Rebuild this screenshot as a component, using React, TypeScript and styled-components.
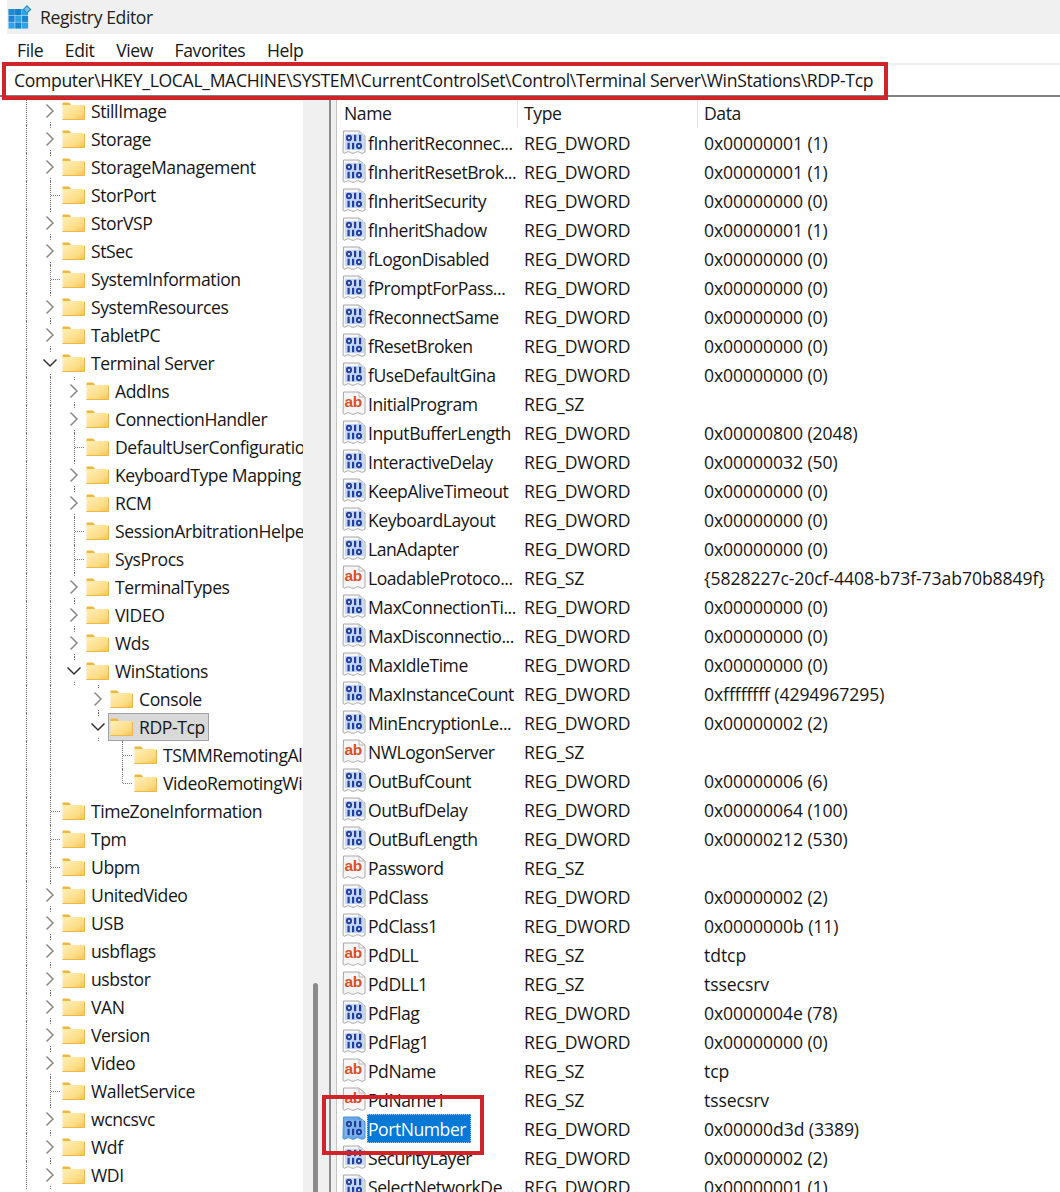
import React from "react";
import styled, { createGlobalStyle } from "styled-components";

const Global = createGlobalStyle`
  html, body { margin: 0; padding: 0; background: #fff; }
  #root { width: 1060px; height: 1192px; overflow: hidden; }
`;

const Window = styled.div`
  width: 1060px;
  height: 1192px;
  display: flex;
  flex-direction: column;
  overflow: hidden;
  background: #fff;
  color: #161616;
  font-family: "Open Sans", "Noto Sans", sans-serif;
  font-size: 17.6px;
  letter-spacing: -0.42px;
  white-space: nowrap;
`;

const TitleBar = styled.div`
  height: 34px;
  flex: none;
  margin-left: 7px;
  background: #f0f0f0;
  display: flex;
  align-items: center;
  gap: 8px;
  padding-left: 1px;
  color: #222;
`;

const MenuBar = styled.div`
  height: 29px;
  flex: none;
  display: flex;
  align-items: center;
  gap: 21.7px;
  padding: 3px 0 0 17px;
  box-sizing: border-box;
`;

const AddressBar = styled.div`
  position: relative;
  z-index: 3;
  height: 34px;
  flex: none;
  box-sizing: border-box;
  border-top: 2px solid #efefef;
  border-bottom: 2px solid #808080;
  padding-left: 14px;
  display: flex;
  align-items: center;
  letter-spacing: -0.335px;
`;

const Annotation = styled.div`
  position: absolute;
  z-index: 5;
  box-sizing: border-box;
  border: 4px solid #d1232a;
  pointer-events: none;
`;

const AddressMark = styled(Annotation)`
  left: 2px;
  top: -3px;
  width: 886px;
  height: 38px;
`;

const PortMark = styled(Annotation)`
  left: -15px;
  top: -19px;
  width: 162px;
  height: 60px;
`;

const Main = styled.div`
  flex: 1;
  min-height: 0;
  display: flex;
`;

const TreePane = styled.div`
  width: 303px;
  flex: none;
  overflow: hidden;
`;

const Row = styled.div`
  height: 28px;
  display: flex;
  align-items: stretch;
  padding-left: 14px;
`;

const Guide = styled.div<{ $line?: boolean }>`
  width: 24px;
  flex: none;
  position: relative;
  &::before {
    content: "";
    display: ${(p) => (p.$line ? "block" : "none")};
    position: absolute;
    left: 12px;
    top: 0;
    bottom: 0;
    border-left: 1px dotted #777;
  }
`;

const Toggle = styled.div`
  width: 24px;
  flex: none;
  position: relative;
  display: flex;
  align-items: center;
  justify-content: center;
  &::before,
  &::after {
    content: "";
    position: absolute;
    left: 12px;
    height: 3px;
    border-left: 1px dotted #777;
  }
  &::before { top: 0; }
  &::after { bottom: 0; }
`;

const Stub = styled.div<{ $last?: boolean }>`
  width: 24px;
  flex: none;
  position: relative;
  &::before {
    content: "";
    position: absolute;
    left: 12px;
    top: 0;
    bottom: ${(p) => (p.$last ? "50%" : "0")};
    border-left: 1px dotted #777;
  }
  &::after {
    content: "";
    position: absolute;
    left: 13px;
    right: 2px;
    top: 50%;
    border-top: 1px dotted #777;
  }
`;

const Label = styled.div<{ $selected?: boolean }>`
  display: flex;
  align-items: center;
  gap: 6px;
  box-sizing: border-box;
  height: 28px;
  margin-left: -2px;
  padding: 0 4px 0 2px;
  background: ${(p) => (p.$selected ? "#d9d9d9" : "transparent")};
  box-shadow: ${(p) => (p.$selected ? "inset 0 0 0 1px #a2a2a2" : "none")};
`;

const Track = styled.div`
  width: 26px;
  flex: none;
  background: #f0f0f0;
  display: flex;
  flex-direction: column;
  justify-content: flex-end;
`;

const Thumb = styled.div`
  width: 5px;
  height: 209px;
  margin-left: 10px;
  background: #8b8b8b;
  border-radius: 3px 3px 0 0;
`;

const Splitter = styled.div`
  width: 7px;
  flex: none;
  box-sizing: border-box;
  background: #f0f0f0;
  border-left: 2px solid #8c8c8c;
`;

const ListPane = styled.div`
  flex: 1;
  min-width: 0;
  position: relative;
  z-index: 2;
  border-left: 1px solid #c4c4c4;
`;

const Header = styled.div`
  height: 31px;
  display: grid;
  grid-template-columns: 181px 180px 1fr;
`;

const HeadCell = styled.div<{ $pad?: number }>`
  display: flex;
  align-items: center;
  padding-left: ${(p) => p.$pad ?? 6}px;
  border-right: 1px solid #e5e5e5;
  &:last-child { border-right: 0; }
`;

const ListRow = styled.div`
  position: relative;
  height: 29px;
  display: grid;
  grid-template-columns: 187px 180px 1fr;
  align-items: center;
`;

const NameCell = styled.div`
  display: flex;
  align-items: center;
  padding-left: 5px;
`;

const Name = styled.span<{ $selected?: boolean }>`
  display: inline-flex;
  align-items: center;
  height: 29px;
  padding: 0 1px;
  box-sizing: border-box;
  letter-spacing: -0.48px;
  background: ${(p) => (p.$selected ? "#0078d7" : "transparent")};
  color: ${(p) => (p.$selected ? "#fff" : "inherit")};
  outline: ${(p) => (p.$selected ? "1px dotted #9cc7ec" : "none")};
  outline-offset: -1px;
`;

const SelectedName = styled(Name)`
  width: 104px;
`;

const ValueCell = styled.div`
  letter-spacing: -0.12px;
`;

const DataCell = styled.div`
  letter-spacing: -0.08px;
`;

const RegLogo = () => (
  <svg width="24" height="24" viewBox="0 0 24 24">
    {[0, 1, 2].flatMap((r) =>
      [0, 1, 2].map((c) => (
        <rect
          key={`${r}${c}`}
          x={c * 6.7 + 0.5}
          y={r * 6.7 + 4}
          width="6.2"
          height="6.2"
          fill={(r + c) % 2 ? "#1788d0" : "#2fa3e6"}
        />
      ))
    )}
    <rect x="0.5" y="4" width="13" height="6.2" fill="#0f76b8" opacity="0.5" />
    <path d="M19 0.8l3.6 3.6-3.6 3.6-3.6-3.6z" fill="#7cc0e8" stroke="#2b8dc8" strokeWidth="1.2" />
  </svg>
);

const Folder = () => (
  <svg width="23" height="18" viewBox="0 0 23 18" style={{ flex: "none" }}>
    <defs>
      <linearGradient id="fg" x1="0" y1="0" x2="1" y2="1">
        <stop offset="0" stopColor="#fff0b8" />
        <stop offset="0.65" stopColor="#fbdc85" />
        <stop offset="1" stopColor="#f3c04e" />
      </linearGradient>
    </defs>
    <path d="M0.5 1.5C0.5 0.8 1 0.5 1.5 0.5H7L9 2.5V5H0.5z" fill="#eeb83e" />
    <rect x="0.5" y="3" width="22" height="15" rx="0.6" fill="url(#fg)" />
    <path d="M0.5 17.5H22.5V4" fill="none" stroke="#edba4a" strokeWidth="1" />
  </svg>
);

const ChevronRight = () => (
  <svg width="10" height="16" viewBox="0 0 10 16">
    <path d="M1.5 1.5L8 8l-6.5 6.5" fill="none" stroke="#8a8a8a" strokeWidth="1.5" />
  </svg>
);

const ChevronDown = () => (
  <svg width="16" height="10" viewBox="0 0 16 10">
    <path d="M1.5 1.5L8 8l6.5-6.5" fill="none" stroke="#333" strokeWidth="1.5" />
  </svg>
);

const Page = ({ selected, children }: { selected?: boolean; children: React.ReactNode }) => (
  <svg width="25" height="25" viewBox="0 0 25 25" style={{ flex: "none" }}>
    <path
      d="M1.5 1H17l6 5v16c-2 1.5-3.5 1.5-5 .5s-3-1-4.5 0-3.5 1-5 0-3-1-4.5 0-2.5 1-3-.5z"
      fill={selected ? "#6aa9e6" : "#f6f6f6"}
      stroke={selected ? "#4f90d6" : "#a8a8a8"}
      strokeWidth="1"
    />
    <path d="M17 1v5h6" fill="none" stroke={selected ? "#4f90d6" : "#b8b8b8"} strokeWidth="1" />
    {children}
  </svg>
);

const Zero = ({ x, y }: { x: number; y: number }) => (
  <ellipse cx={x} cy={y} rx="2.1" ry="2.2" fill="none" stroke="#233f9c" strokeWidth="1.9" />
);
const One = ({ x, y }: { x: number; y: number }) => (
  <rect x={x - 1} y={y - 3.2} width="2.2" height="6.4" fill="#233f9c" />
);

const DwordIcon = ({ selected }: { selected?: boolean }) => (
  <Page selected={selected}>
    <rect x="3" y="4" width="19" height="16" fill={selected ? "#7fb6ea" : "#c6d7f7"} />
    <Zero x={7} y={8} />
    <One x={13} y={8} />
    <One x={18} y={8} />
    <One x={6.5} y={16} />
    <One x={11} y={16} />
    <Zero x={17} y={16} />
  </Page>
);

const AbText = styled.text`
  font-family: "Liberation Sans", sans-serif;
  font-weight: 700;
  font-size: 15.5px;
  letter-spacing: -0.3px;
  fill: #d9502a;
`;

const StringIcon = () => (
  <Page>
    <AbText x="2.5" y="16">ab</AbText>
  </Page>
);

type TreeItem = { t: string; k: "c" | "o" | "s" | "l"; d?: number; sel?: boolean };

const tree: TreeItem[] = [
  { t: "StillImage", k: "c" },
  { t: "Storage", k: "c" },
  { t: "StorageManagement", k: "c" },
  { t: "StorPort", k: "s" },
  { t: "StorVSP", k: "c" },
  { t: "StSec", k: "c" },
  { t: "SystemInformation", k: "s" },
  { t: "SystemResources", k: "c" },
  { t: "TabletPC", k: "c" },
  { t: "Terminal Server", k: "o" },
  { t: "AddIns", k: "c", d: 1 },
  { t: "ConnectionHandler", k: "c", d: 1 },
  { t: "DefaultUserConfiguration", k: "s", d: 1 },
  { t: "KeyboardType Mapping", k: "c", d: 1 },
  { t: "RCM", k: "c", d: 1 },
  { t: "SessionArbitrationHelper", k: "s", d: 1 },
  { t: "SysProcs", k: "s", d: 1 },
  { t: "TerminalTypes", k: "c", d: 1 },
  { t: "VIDEO", k: "c", d: 1 },
  { t: "Wds", k: "c", d: 1 },
  { t: "WinStations", k: "o", d: 1 },
  { t: "Console", k: "c", d: 2 },
  { t: "RDP-Tcp", k: "o", d: 2, sel: true },
  { t: "TSMMRemotingAllowList", k: "s", d: 3 },
  { t: "VideoRemotingWindowNames", k: "l", d: 3 },
  { t: "TimeZoneInformation", k: "s" },
  { t: "Tpm", k: "s" },
  { t: "Ubpm", k: "s" },
  { t: "UnitedVideo", k: "c" },
  { t: "USB", k: "c" },
  { t: "usbflags", k: "c" },
  { t: "usbstor", k: "c" },
  { t: "VAN", k: "c" },
  { t: "Version", k: "c" },
  { t: "Video", k: "c" },
  { t: "WalletService", k: "s" },
  { t: "wcncsvc", k: "c" },
  { t: "Wdf", k: "c" },
  { t: "WDI", k: "c" },
];

const D = "REG_DWORD";
const S = "REG_SZ";
const z = "0x00000000 (0)";
const one = "0x00000001 (1)";
const two = "0x00000002 (2)";

const values: [string, string, string][] = [
  ["fInheritReconnec...", D, one],
  ["fInheritResetBrok...", D, one],
  ["fInheritSecurity", D, z],
  ["fInheritShadow", D, one],
  ["fLogonDisabled", D, z],
  ["fPromptForPass...", D, z],
  ["fReconnectSame", D, z],
  ["fResetBroken", D, z],
  ["fUseDefaultGina", D, z],
  ["InitialProgram", S, ""],
  ["InputBufferLength", D, "0x00000800 (2048)"],
  ["InteractiveDelay", D, "0x00000032 (50)"],
  ["KeepAliveTimeout", D, z],
  ["KeyboardLayout", D, z],
  ["LanAdapter", D, z],
  ["LoadableProtoco...", S, "{5828227c-20cf-4408-b73f-73ab70b8849f}"],
  ["MaxConnectionTi...", D, z],
  ["MaxDisconnectio...", D, z],
  ["MaxIdleTime", D, z],
  ["MaxInstanceCount", D, "0xffffffff (4294967295)"],
  ["MinEncryptionLe...", D, two],
  ["NWLogonServer", S, ""],
  ["OutBufCount", D, "0x00000006 (6)"],
  ["OutBufDelay", D, "0x00000064 (100)"],
  ["OutBufLength", D, "0x00000212 (530)"],
  ["Password", S, ""],
  ["PdClass", D, two],
  ["PdClass1", D, "0x0000000b (11)"],
  ["PdDLL", S, "tdtcp"],
  ["PdDLL1", S, "tssecsrv"],
  ["PdFlag", D, "0x0000004e (78)"],
  ["PdFlag1", D, z],
  ["PdName", S, "tcp"],
  ["PdName1", S, "tssecsrv"],
  ["PortNumber", D, "0x00000d3d (3389)"],
  ["SecurityLayer", D, two],
  ["SelectNetworkDe...", D, one],
];

const TreeRow = ({ item }: { item: TreeItem }) => {
  const d = item.d ?? 0;
  return (
    <Row>
      <Guide $line />
      {d >= 1 && <Guide $line />}
      {d >= 2 && <Guide />}
      {d >= 3 && <Guide />}
      {item.k === "s" || item.k === "l" ? (
        <Stub $last={item.k === "l"} />
      ) : (
        <Toggle>{item.k === "o" ? <ChevronDown /> : <ChevronRight />}</Toggle>
      )}
      <Label $selected={item.sel}>
        <Folder />
        <span>{item.t}</span>
      </Label>
    </Row>
  );
};

export default function App() {
  return (
    <Window>
      <Global />
      <TitleBar>
        <RegLogo />
        <span>Registry Editor</span>
      </TitleBar>
      <MenuBar>
        <span>File</span>
        <span>Edit</span>
        <span>View</span>
        <span>Favorites</span>
        <span>Help</span>
      </MenuBar>
      <AddressBar>
        <span>Computer\HKEY_LOCAL_MACHINE\SYSTEM\CurrentControlSet\Control\Terminal Server\WinStations\RDP-Tcp</span>
        <AddressMark />
      </AddressBar>
      <Main>
        <TreePane>
          {tree.map((it) => (
            <TreeRow key={it.t} item={it} />
          ))}
        </TreePane>
        <Track>
          <Thumb />
        </Track>
        <Splitter />
        <ListPane>
          <Header>
            <HeadCell $pad={7}>Name</HeadCell>
            <HeadCell>Type</HeadCell>
            <HeadCell>Data</HeadCell>
          </Header>
          {values.map(([name, type, data]) => {
            const sel = name === "PortNumber";
            return (
              <ListRow key={name}>
                <NameCell>
                  {type === D ? <DwordIcon selected={sel} /> : <StringIcon />}
                  {sel ? <SelectedName $selected>{name}</SelectedName> : <Name>{name}</Name>}
                </NameCell>
                <ValueCell>{type}</ValueCell>
                <DataCell>{data}</DataCell>
                {sel && <PortMark />}
              </ListRow>
            );
          })}
        </ListPane>
      </Main>
    </Window>
  );
}
